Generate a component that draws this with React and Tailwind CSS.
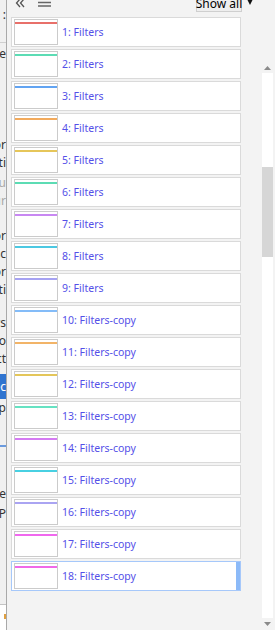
import React from "react";

const items = [
  { n: 1, t: "Filters", c: "bg-[#e8706a]" },
  { n: 2, t: "Filters", c: "bg-[#5cdcb4]" },
  { n: 3, t: "Filters", c: "bg-[#62a4f2]" },
  { n: 4, t: "Filters", c: "bg-[#f2aa5c]" },
  { n: 5, t: "Filters", c: "bg-[#e6c65a]" },
  { n: 6, t: "Filters", c: "bg-[#5cdcb4]" },
  { n: 7, t: "Filters", c: "bg-[#c888f2]" },
  { n: 8, t: "Filters", c: "bg-[#4cc8e2]" },
  { n: 9, t: "Filters", c: "bg-[#a6a2f2]" },
  { n: 10, t: "Filters-copy", c: "bg-[#84bcf8]" },
  { n: 11, t: "Filters-copy", c: "bg-[#f2b468]" },
  { n: 12, t: "Filters-copy", c: "bg-[#e4c65a]" },
  { n: 13, t: "Filters-copy", c: "bg-[#66e2c2]" },
  { n: 14, t: "Filters-copy", c: "bg-[#d47af2]" },
  { n: 15, t: "Filters-copy", c: "bg-[#48d0e2]" },
  { n: 16, t: "Filters-copy", c: "bg-[#aaa4f2]" },
  { n: 17, t: "Filters-copy", c: "bg-[#f068ee]" },
  { n: 18, t: "Filters-copy", c: "bg-[#f068e8]", sel: true },
];

// rows of the clipped panel on the far left
const strip = [
  { cls: "mt-[7px] h-[16px]", t: "Name :" },
  { cls: "mt-[19px] h-px bg-[#cfcfcf]" },
  { cls: "mt-[2px] h-[18px]", t: "Size" },
  { cls: "mt-[73px] h-[18px]", t: "Color" },
  { cls: "h-[18px]", t: "Opti" },
  { cls: "mt-[2px] h-[18px] text-[#a8a8a8]", t: "Blu" },
  { cls: "h-[18px] text-[#a8a8a8]", t: "Blur" },
  { cls: "mt-[17px] h-[18px]", t: "Vector" },
  { cls: "h-[18px]", t: "Desc" },
  { cls: "h-[18px]", t: "Editor" },
  { cls: "h-[18px]", t: "Opti" },
  { cls: "mt-[15px] h-[18px]", t: "Colors" },
  { cls: "h-[18px]", t: "Disco" },
  { cls: "h-[18px]", t: "Struct" },
  { cls: "mt-[6px] h-[25px] bg-[#2f74d0] text-white", t: "Selec" },
  { cls: "h-[18px]", t: "Setup" },
  { cls: "mt-[28px] h-[2px] bg-[#6a9ade]" },
  { cls: "mt-[38px] h-[18px]", t: "Scale" },
  { cls: "mt-[2px] h-[18px]", t: "SP" },
];

function LeftStrip() {
  return (
    <div className="w-[6px] shrink-0 flex flex-col overflow-hidden bg-[#f0f0f0] text-[12px] leading-[18px] text-[#333]">
      {strip.map((r, i) =>
        r.t ? (
          <div key={i} className={`flex items-center justify-end whitespace-nowrap ${r.cls}`}>
            {r.t}
          </div>
        ) : (
          <div key={i} className={`shrink-0 ${r.cls}`} />
        )
      )}
      <div className="mt-[81px] h-px shrink-0 bg-[#c4c4c4]" />
      <div className="flex-1 bg-white">
        <div className="mt-[9px] ml-[4px] w-[2px] h-[5px] bg-[#e0a040]" />
      </div>
    </div>
  );
}

function Header() {
  return (
    <div className="h-[16px] shrink-0 flex items-start">
      <svg className="ml-[8px] -mt-[2px]" width="10" height="10" viewBox="0 0 10 10">
        <path d="M5 1 L1.5 5 L5 9 M9 1 L5.5 5 L9 9" fill="none" stroke="#555" strokeWidth="1.3" />
      </svg>
      <svg className="ml-[13px] -mt-[2px]" width="13" height="10" viewBox="0 0 13 10">
        <path d="M0 1 H13 M0 4.5 H13 M0 8 H13" stroke="#666" strokeWidth="1.4" />
      </svg>
      <div className="flex-1" />
      <div className="w-[46px] h-[20px] -mt-[8px] pt-[3px] flex items-center justify-center border border-[#cfcfcf] bg-[#eeeeee] text-[12px] text-black whitespace-nowrap">
        Show all
      </div>
      <svg className="ml-[4px] -mt-[3px]" width="8" height="9" viewBox="0 0 8 9">
        <path d="M0 0 L8 0 L4 8 Z" fill="#111" />
      </svg>
      <div className="w-[8px]" />
    </div>
  );
}

function Item({ it }) {
  return (
    <div
      className={`w-[230px] h-[30px] flex items-center bg-white border pl-[2px] ${
        it.sel ? "border-[#a6c8fa]" : "border-[#dadada]"
      }`}
    >
      <div className="w-[44px] h-[26px] shrink-0 border border-[#cbcbcb] bg-white">
        <div className={`mt-[2px] h-[2px] ${it.c}`} />
      </div>
      <div className="ml-[4px] pt-[2px] text-[10.5px] text-[#5450e8] whitespace-nowrap">
        {it.n}: {it.t}
      </div>
      {it.sel && <div className="ml-auto w-[4px] self-stretch bg-[#8cbaf8]" />}
    </div>
  );
}

function Scrollbar() {
  return (
    <div className="w-[11px] shrink-0 flex flex-col">
      <div className="h-[62px]" />
      <div className="h-[11px] flex items-center justify-center">
        <svg width="7" height="4" viewBox="0 0 7 4">
          <path d="M0 4 L3.5 0 L7 4 Z" fill="#8a8a8a" />
        </svg>
      </div>
      <div className="flex-1 bg-white">
        <div className="mt-[94px] h-[90px] bg-[#d6d6d6]" />
      </div>
      <div className="h-[12px] flex justify-center pt-[4px]">
        <svg width="7" height="4" viewBox="0 0 7 4">
          <path d="M0 0 L7 0 L3.5 4 Z" fill="#8a8a8a" />
        </svg>
      </div>
    </div>
  );
}

export default function App() {
  return (
    <div className="w-[275px] h-[630px] flex overflow-hidden bg-[#f3f3f3] font-['Noto_Sans',sans-serif]">
      <LeftStrip />
      <div className="w-px shrink-0 bg-[#a9a9a9]" />
      <div className="flex-1 min-w-0 flex flex-col">
        <Header />
        <div className="mt-[1px] flex flex-col gap-[2px] pl-[4px]">
          {items.map((it) => (
            <Item key={it.n} it={it} />
          ))}
        </div>
      </div>
      <Scrollbar />
      <div className="w-[2px] shrink-0" />
    </div>
  );
}
